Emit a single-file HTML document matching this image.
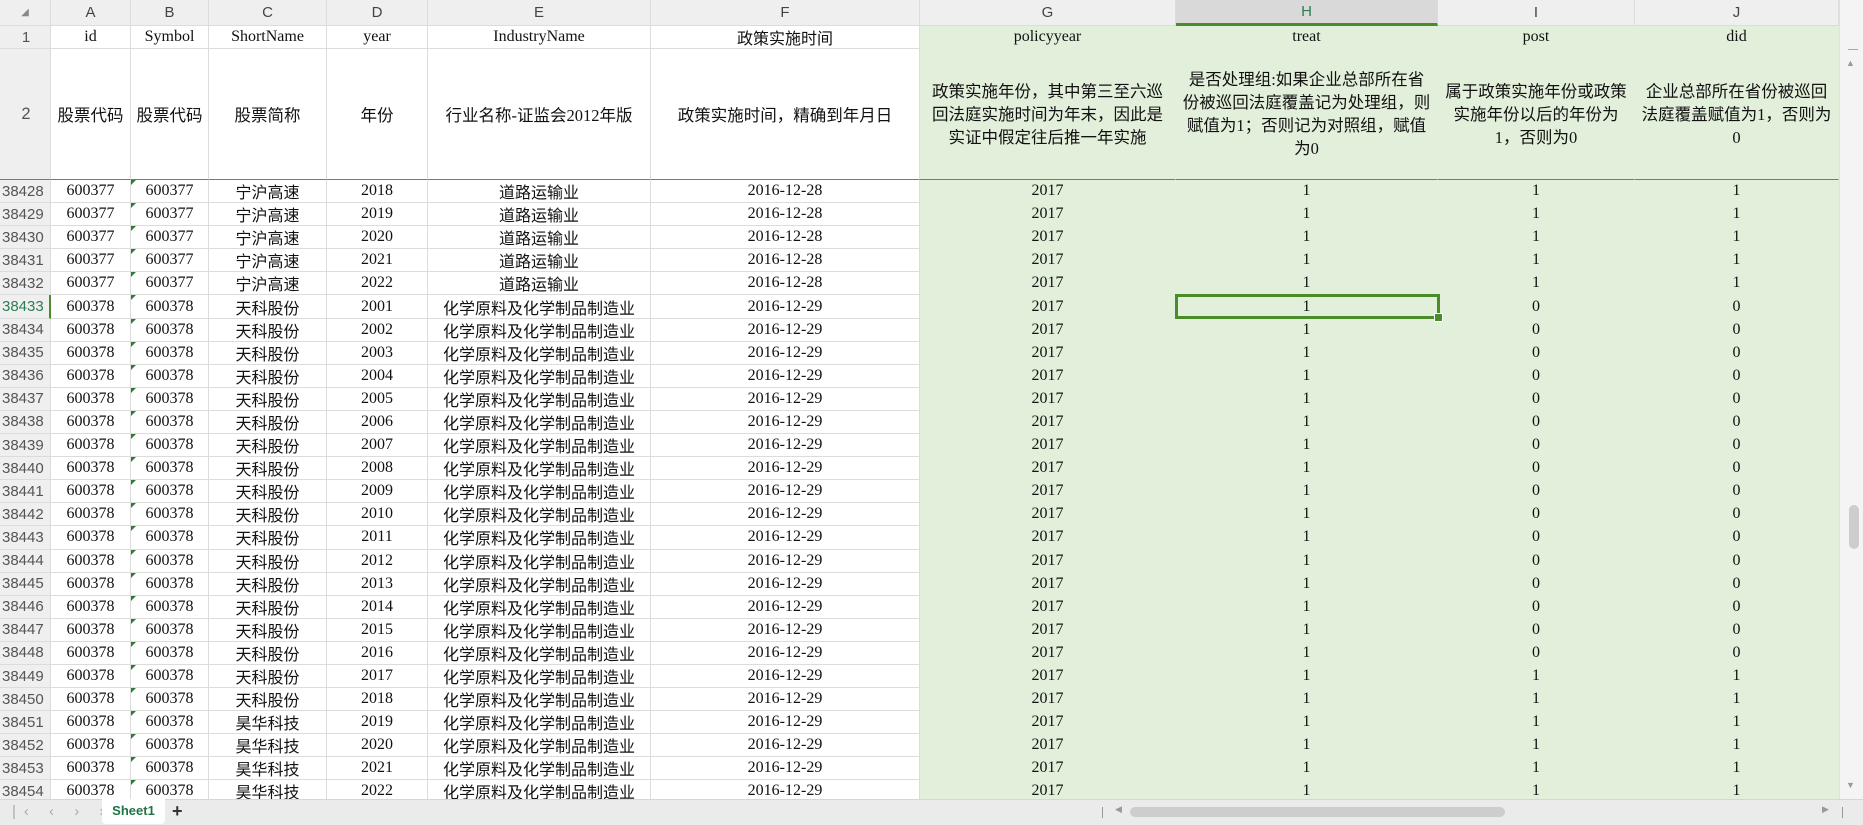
<!DOCTYPE html>
<html><head><meta charset="utf-8"><style>
*{margin:0;padding:0;box-sizing:border-box}
body{width:1863px;height:825px;overflow:hidden;background:#fff;font-family:"Liberation Serif","Noto Sans CJK SC",serif;font-size:16px;color:#111;position:relative}
.g{position:absolute;left:0;top:0;width:1839px;height:799px;display:grid;overflow:hidden;
grid-template-columns:51px 80px 78px 118px 101px 223px 269px 256px 262px 197px 204px;
grid-template-rows:26px 23px 131px repeat(27,23.1px)}
.g>div{display:flex;align-items:center;justify-content:center;text-align:center;border-right:1px solid #dcdcdc;border-bottom:1px solid #dcdcdc;white-space:nowrap;overflow:hidden;position:relative}
.ch{background:#efefef;font-family:"Liberation Sans",sans-serif;color:#444;font-size:15px}
.rh{background:#efefef;font-family:"Liberation Sans",sans-serif;color:#555;font-size:15px;justify-content:flex-start!important;padding-left:2px}
.gr{background:#e2efda;border-right-color:#e2efda!important;border-bottom-color:#e2efda!important}
.w{line-height:23px;font-size:16.5px;padding:0}
.tri::before{content:"";position:absolute;left:0;top:0;border-top:5px solid #2e7d32;border-right:5px solid transparent}
.b2{border-bottom:1px solid #3c9a5f!important;font-size:16.5px}
.sel{position:absolute;left:1175px;top:294px;width:265px;height:25px;border:3px solid #4a8c2a}
.sel::after{content:"";position:absolute;right:-6px;bottom:-6px;width:7px;height:7px;background:#4a8c2a;border:1px solid #fff}
.bar{position:absolute;left:0;top:799px;width:1863px;height:26px;background:#ebebeb;border-top:1px solid #d6d6d6}
</style></head><body>
<div class="g">
<div class="ch" style="color:#888;font-size:10px">◢</div><div class="ch">A</div><div class="ch">B</div><div class="ch">C</div><div class="ch">D</div><div class="ch">E</div><div class="ch">F</div><div class="ch">G</div><div class="ch" style="background:#d9d9d9;color:#2e7d52;border-bottom:3px solid #4a8c2a">H</div><div class="ch">I</div><div class="ch">J</div>
<div class="rh" style="justify-content:center!important">1</div><div>id</div><div>Symbol</div><div>ShortName</div><div>year</div><div>IndustryName</div><div>政策实施时间</div><div class="gr">policyyear</div><div class="gr">treat</div><div class="gr">post</div><div class="gr">did</div>
<div class="rh b2" style="justify-content:center!important">2</div><div class="b2">股票代码</div><div class="b2">股票代码</div><div class="b2">股票简称</div><div class="b2">年份</div><div class="b2">行业名称-证监会2012年版</div><div class="b2">政策实施时间，精确到年月日</div><div class="gr w b2">政策实施年份，其中第三至六巡<br>回法庭实施时间为年末，因此是<br>实证中假定往后推一年实施</div><div class="gr w b2">是否处理组:如果企业总部所在省<br>份被巡回法庭覆盖记为处理组，则<br>赋值为1；否则记为对照组，赋值<br>为0</div><div class="gr w b2">属于政策实施年份或政策<br>实施年份以后的年份为<br>1，否则为0</div><div class="gr w b2">企业总部所在省份被巡回<br>法庭覆盖赋值为1，否则为<br>0</div>
<div class="rh">38428</div><div>600377</div><div class="tri">600377</div><div>宁沪高速</div><div>2018</div><div>道路运输业</div><div>2016-12-28</div><div class="gr">2017</div><div class="gr">1</div><div class="gr">1</div><div class="gr">1</div>
<div class="rh">38429</div><div>600377</div><div class="tri">600377</div><div>宁沪高速</div><div>2019</div><div>道路运输业</div><div>2016-12-28</div><div class="gr">2017</div><div class="gr">1</div><div class="gr">1</div><div class="gr">1</div>
<div class="rh">38430</div><div>600377</div><div class="tri">600377</div><div>宁沪高速</div><div>2020</div><div>道路运输业</div><div>2016-12-28</div><div class="gr">2017</div><div class="gr">1</div><div class="gr">1</div><div class="gr">1</div>
<div class="rh">38431</div><div>600377</div><div class="tri">600377</div><div>宁沪高速</div><div>2021</div><div>道路运输业</div><div>2016-12-28</div><div class="gr">2017</div><div class="gr">1</div><div class="gr">1</div><div class="gr">1</div>
<div class="rh">38432</div><div>600377</div><div class="tri">600377</div><div>宁沪高速</div><div>2022</div><div>道路运输业</div><div>2016-12-28</div><div class="gr">2017</div><div class="gr">1</div><div class="gr">1</div><div class="gr">1</div>
<div class="rh" style="color:#2e7d52;border-right:2px solid #4a8c2a">38433</div><div>600378</div><div class="tri">600378</div><div>天科股份</div><div>2001</div><div>化学原料及化学制品制造业</div><div>2016-12-29</div><div class="gr">2017</div><div class="gr">1</div><div class="gr">0</div><div class="gr">0</div>
<div class="rh">38434</div><div>600378</div><div class="tri">600378</div><div>天科股份</div><div>2002</div><div>化学原料及化学制品制造业</div><div>2016-12-29</div><div class="gr">2017</div><div class="gr">1</div><div class="gr">0</div><div class="gr">0</div>
<div class="rh">38435</div><div>600378</div><div class="tri">600378</div><div>天科股份</div><div>2003</div><div>化学原料及化学制品制造业</div><div>2016-12-29</div><div class="gr">2017</div><div class="gr">1</div><div class="gr">0</div><div class="gr">0</div>
<div class="rh">38436</div><div>600378</div><div class="tri">600378</div><div>天科股份</div><div>2004</div><div>化学原料及化学制品制造业</div><div>2016-12-29</div><div class="gr">2017</div><div class="gr">1</div><div class="gr">0</div><div class="gr">0</div>
<div class="rh">38437</div><div>600378</div><div class="tri">600378</div><div>天科股份</div><div>2005</div><div>化学原料及化学制品制造业</div><div>2016-12-29</div><div class="gr">2017</div><div class="gr">1</div><div class="gr">0</div><div class="gr">0</div>
<div class="rh">38438</div><div>600378</div><div class="tri">600378</div><div>天科股份</div><div>2006</div><div>化学原料及化学制品制造业</div><div>2016-12-29</div><div class="gr">2017</div><div class="gr">1</div><div class="gr">0</div><div class="gr">0</div>
<div class="rh">38439</div><div>600378</div><div class="tri">600378</div><div>天科股份</div><div>2007</div><div>化学原料及化学制品制造业</div><div>2016-12-29</div><div class="gr">2017</div><div class="gr">1</div><div class="gr">0</div><div class="gr">0</div>
<div class="rh">38440</div><div>600378</div><div class="tri">600378</div><div>天科股份</div><div>2008</div><div>化学原料及化学制品制造业</div><div>2016-12-29</div><div class="gr">2017</div><div class="gr">1</div><div class="gr">0</div><div class="gr">0</div>
<div class="rh">38441</div><div>600378</div><div class="tri">600378</div><div>天科股份</div><div>2009</div><div>化学原料及化学制品制造业</div><div>2016-12-29</div><div class="gr">2017</div><div class="gr">1</div><div class="gr">0</div><div class="gr">0</div>
<div class="rh">38442</div><div>600378</div><div class="tri">600378</div><div>天科股份</div><div>2010</div><div>化学原料及化学制品制造业</div><div>2016-12-29</div><div class="gr">2017</div><div class="gr">1</div><div class="gr">0</div><div class="gr">0</div>
<div class="rh">38443</div><div>600378</div><div class="tri">600378</div><div>天科股份</div><div>2011</div><div>化学原料及化学制品制造业</div><div>2016-12-29</div><div class="gr">2017</div><div class="gr">1</div><div class="gr">0</div><div class="gr">0</div>
<div class="rh">38444</div><div>600378</div><div class="tri">600378</div><div>天科股份</div><div>2012</div><div>化学原料及化学制品制造业</div><div>2016-12-29</div><div class="gr">2017</div><div class="gr">1</div><div class="gr">0</div><div class="gr">0</div>
<div class="rh">38445</div><div>600378</div><div class="tri">600378</div><div>天科股份</div><div>2013</div><div>化学原料及化学制品制造业</div><div>2016-12-29</div><div class="gr">2017</div><div class="gr">1</div><div class="gr">0</div><div class="gr">0</div>
<div class="rh">38446</div><div>600378</div><div class="tri">600378</div><div>天科股份</div><div>2014</div><div>化学原料及化学制品制造业</div><div>2016-12-29</div><div class="gr">2017</div><div class="gr">1</div><div class="gr">0</div><div class="gr">0</div>
<div class="rh">38447</div><div>600378</div><div class="tri">600378</div><div>天科股份</div><div>2015</div><div>化学原料及化学制品制造业</div><div>2016-12-29</div><div class="gr">2017</div><div class="gr">1</div><div class="gr">0</div><div class="gr">0</div>
<div class="rh">38448</div><div>600378</div><div class="tri">600378</div><div>天科股份</div><div>2016</div><div>化学原料及化学制品制造业</div><div>2016-12-29</div><div class="gr">2017</div><div class="gr">1</div><div class="gr">0</div><div class="gr">0</div>
<div class="rh">38449</div><div>600378</div><div class="tri">600378</div><div>天科股份</div><div>2017</div><div>化学原料及化学制品制造业</div><div>2016-12-29</div><div class="gr">2017</div><div class="gr">1</div><div class="gr">1</div><div class="gr">1</div>
<div class="rh">38450</div><div>600378</div><div class="tri">600378</div><div>天科股份</div><div>2018</div><div>化学原料及化学制品制造业</div><div>2016-12-29</div><div class="gr">2017</div><div class="gr">1</div><div class="gr">1</div><div class="gr">1</div>
<div class="rh">38451</div><div>600378</div><div class="tri">600378</div><div>昊华科技</div><div>2019</div><div>化学原料及化学制品制造业</div><div>2016-12-29</div><div class="gr">2017</div><div class="gr">1</div><div class="gr">1</div><div class="gr">1</div>
<div class="rh">38452</div><div>600378</div><div class="tri">600378</div><div>昊华科技</div><div>2020</div><div>化学原料及化学制品制造业</div><div>2016-12-29</div><div class="gr">2017</div><div class="gr">1</div><div class="gr">1</div><div class="gr">1</div>
<div class="rh">38453</div><div>600378</div><div class="tri">600378</div><div>昊华科技</div><div>2021</div><div>化学原料及化学制品制造业</div><div>2016-12-29</div><div class="gr">2017</div><div class="gr">1</div><div class="gr">1</div><div class="gr">1</div>
<div class="rh">38454</div><div>600378</div><div class="tri">600378</div><div>昊华科技</div><div>2022</div><div>化学原料及化学制品制造业</div><div>2016-12-29</div><div class="gr">2017</div><div class="gr">1</div><div class="gr">1</div><div class="gr">1</div>
</div>
<div class="sel"></div>
<div style="position:absolute;left:1839px;top:0;width:24px;height:799px;background:#f4f4f4;border-left:1px solid #e0e0e0"></div>
<div style="position:absolute;left:1848px;top:49px;width:10px;height:1px;background:#aaa"></div>
<div style="position:absolute;left:1846px;top:58px;font:9px 'Liberation Sans',sans-serif;color:#999">▲</div>
<div style="position:absolute;left:1849px;top:505px;width:10px;height:44px;background:#cdcdcd;border-radius:5px"></div>
<div style="position:absolute;left:1846px;top:780px;font:9px 'Liberation Sans',sans-serif;color:#999">▼</div>
<div class="bar">
<div style="position:absolute;left:12px;top:3px;font:15px 'Liberation Sans',sans-serif;color:#aaa;letter-spacing:8px">|‹ ‹ › ›|</div>
<div style="position:absolute;left:102px;top:-1px;width:63px;height:25px;background:#fff;border-radius:0 0 4px 4px;text-align:center;font:bold 13px 'Liberation Sans',sans-serif;color:#217346;line-height:24px">Sheet1</div>
<div style="position:absolute;left:172px;top:1px;font:bold 18px 'Liberation Sans',sans-serif;color:#333">+</div>
<div style="position:absolute;left:1102px;top:7px;width:1px;height:11px;background:#999"></div>
<div style="position:absolute;left:1115px;top:4px;font:9px 'Liberation Sans',sans-serif;color:#999">◀</div>
<div style="position:absolute;left:1130px;top:7px;width:375px;height:10px;background:#cdcdcd;border-radius:5px"></div>
<div style="position:absolute;left:1822px;top:4px;font:9px 'Liberation Sans',sans-serif;color:#999">▶</div>
<div style="position:absolute;left:1842px;top:7px;width:1px;height:11px;background:#999"></div>
</div>
</body></html>
